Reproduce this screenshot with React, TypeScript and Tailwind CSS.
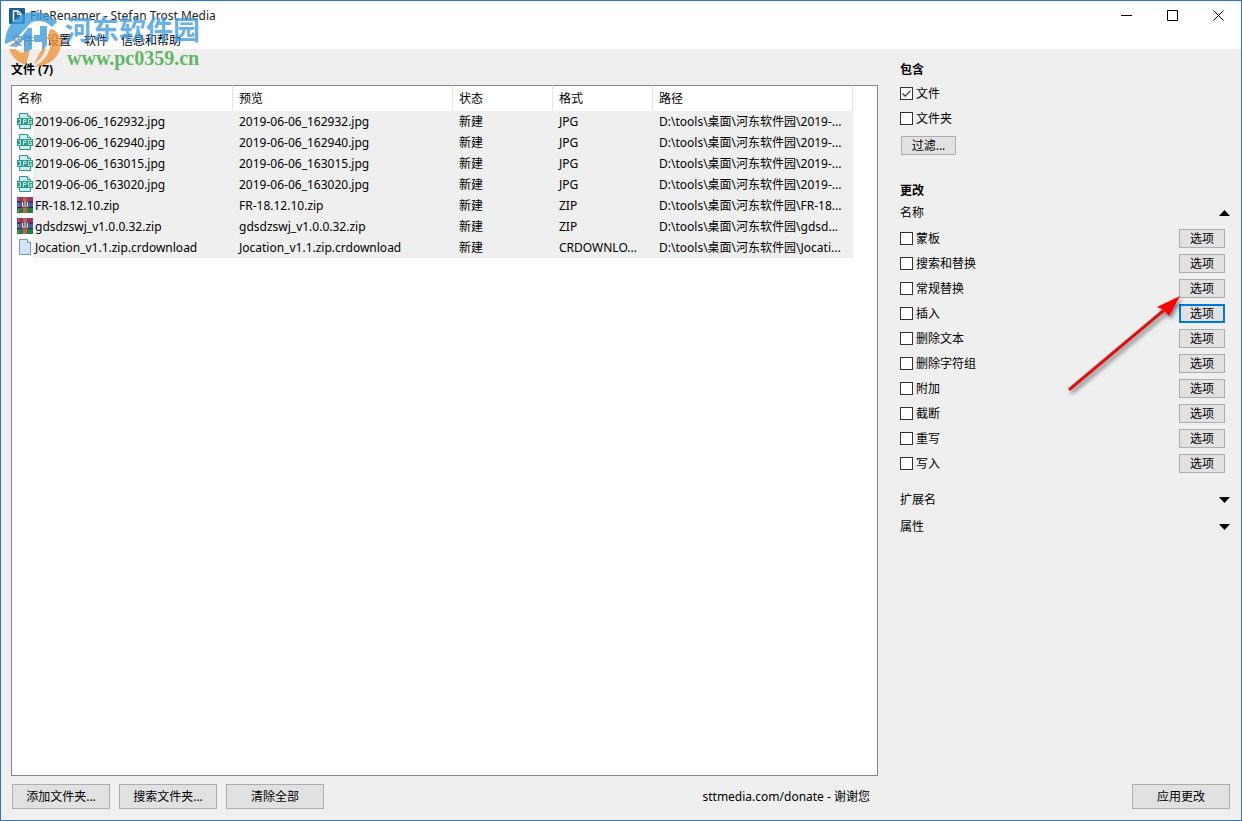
import { useState } from "react";
import clsx from "clsx";

type FileKind = "jpg" | "zip" | "blank";

type FileRow = {
  name: string;
  kind: FileKind;
  format: string;
  path: string;
};

const FILES: FileRow[] = [
  { name: "2019-06-06_162932.jpg", kind: "jpg", format: "JPG", path: "D:\\tools\\桌面\\河东软件园\\2019-..." },
  { name: "2019-06-06_162940.jpg", kind: "jpg", format: "JPG", path: "D:\\tools\\桌面\\河东软件园\\2019-..." },
  { name: "2019-06-06_163015.jpg", kind: "jpg", format: "JPG", path: "D:\\tools\\桌面\\河东软件园\\2019-..." },
  { name: "2019-06-06_163020.jpg", kind: "jpg", format: "JPG", path: "D:\\tools\\桌面\\河东软件园\\2019-..." },
  { name: "FR-18.12.10.zip", kind: "zip", format: "ZIP", path: "D:\\tools\\桌面\\河东软件园\\FR-18..." },
  { name: "gdsdzswj_v1.0.0.32.zip", kind: "zip", format: "ZIP", path: "D:\\tools\\桌面\\河东软件园\\gdsd..." },
  { name: "Jocation_v1.1.zip.crdownload", kind: "blank", format: "CRDOWNLO...", path: "D:\\tools\\桌面\\河东软件园\\Jocati..." },
];

const COLUMNS = ["名称", "预览", "状态", "格式", "路径"];
const MENU = ["文件", "设置", "软件", "信息和帮助"];
const CHANGES = [
  "蒙板",
  "搜索和替换",
  "常规替换",
  "插入",
  "删除文本",
  "删除字符组",
  "附加",
  "截断",
  "重写",
  "写入",
];

function FileIcon({ kind }: { kind: FileKind }) {
  if (kind === "jpg") {
    return (
      <svg width="16" height="16" viewBox="0 0 16 16" className="mt-[2px] shrink-0" aria-hidden="true">
        <path d="M2.500 .5h8l3 3v12h-11z" fill="#c9f0ee" stroke="#2c9b8c" />
        <path d="M10.500 .5v3h3" fill="#fff" stroke="#2c9b8c" />
        <rect x="0" y="5" width="16" height="7" fill="#2c9b8c" />
        <path
          d="M1.500 6.500h2v4h-2.500M6.500 11v-4.500h2.500v2h-2.500M15 6.500h-3.500v4h3v-2h-1.500"
          fill="none"
          stroke="#c8efe6"
          strokeWidth=".9"
        />
      </svg>
    );
  }
  if (kind === "zip") {
    return (
      <svg width="16" height="16" viewBox="0 0 16 16" className="mt-[2px] shrink-0" aria-hidden="true">
        <rect width="16" height="5" fill="#9c3569" />
        <rect y="5" width="16" height="6" fill="#3a63b4" />
        <rect y="11" width="16" height="5" fill="#267a4c" />
        <path d="M0 5h16M0 10.500h16" stroke="#2b2348" />
        <path d="M1.500 1v3M1.500 6v4M1.500 12v3" stroke="#e7a3c8" strokeOpacity=".5" />
        <rect x="6" width="4" height="16" fill="#b5683b" />
        <rect x="4" y="4" width="8" height="7" fill="#6b4a61" />
        <path d="M5.500 5v4h5V5M8 4v4" fill="none" stroke="#f3ece0" />
      </svg>
    );
  }
  return (
    <svg width="16" height="16" viewBox="0 0 16 16" className="mt-[2px] shrink-0" aria-hidden="true">
      <path d="M2.500 .5h8l3 3v12h-11z" fill="#cfe3fb" stroke="#7f97b8" />
      <path d="M10.500 .5v3h3" fill="#f3f9ff" stroke="#7f97b8" />
    </svg>
  );
}

function CheckRow({ label, defaultChecked }: { label: string; defaultChecked?: boolean }) {
  return (
    <label className="flex h-[25px] items-center gap-[3px]">
      <span className="grid">
        <input
          type="checkbox"
          defaultChecked={defaultChecked}
          className="peer col-start-1 row-start-1 size-[13px] appearance-none border border-[#333] bg-white"
        />
        <svg
          width="13"
          height="13"
          viewBox="0 0 13 13"
          className="pointer-events-none invisible col-start-1 row-start-1 peer-checked:visible"
          aria-hidden="true"
        >
          <path d="M2.500 6.500l2.700 2.700 5.300-5.500" fill="none" stroke="#333" strokeWidth="1.200" />
        </svg>
      </span>
      {label}
    </label>
  );
}

function Triangle({ up }: { up?: boolean }) {
  return (
    <svg width="11" height="6" viewBox="0 0 11 6" aria-hidden="true">
      <path d={up ? "M0 6L5.500 0 11 6z" : "M0 0h11L5.500 6z"} fill="#000" />
    </svg>
  );
}

function Section({ label, open, onToggle, className }: {
  label: string;
  open?: boolean;
  onToggle?: () => void;
  className?: string;
}) {
  return (
    <button
      type="button"
      onClick={onToggle}
      className={clsx("flex h-[18px] w-full items-center justify-between", className)}
    >
      {label}
      <Triangle up={open} />
    </button>
  );
}

function FooterButton({ label }: { label: string }) {
  return (
    <button type="button" className="h-[25px] w-[98px] border border-[#adadad] bg-[#e1e1e1]">
      {label}
    </button>
  );
}

function Watermark() {
  return (
    <div className="pointer-events-none absolute top-2 left-1 flex select-none">
      <svg width="60" height="62" viewBox="0 0 60 62" aria-hidden="true">
        <g fill="#3d9bdc" fillOpacity=".8">
          {/* upper arc, left stem, right stem */}
          <path d="M0 35C0 16 13 3 30 3c9 0 17 4 22 10l-5 5c-4-4-8-6-13-6-6 0-9 2-12 6L10 31z" />
          <path d="M2 37l8-1 13-17h4v21l-8 4V30l-7 8z" />
          <path d="M29 26h6v-9h7v19l-5 6v-9h-8z" />
        </g>
        <g fill="#f2953c" fillOpacity=".8">
          <path d="M4 40h6l6 4 9-3-4 15C13 54 7 48 4 40z" />
          <path d="M45 20c7 1 11 7 11 14 0 14-12 23-27 24 9-6 14-11 16-19 1-5 1-9-3-9z" />
          <path d="M35 43l6-5c-2 8-6 13-12 17z" />
        </g>
      </svg>
      <div className="flex flex-col">
        <span className="h-[36px] font-['Noto_Sans_CJK_SC',sans-serif] text-[27px] leading-[40px] font-bold text-[#3f9ae0]/80">
          河东软件园
        </span>
        <span className="pl-[2px] font-['Liberation_Serif',serif] text-[20px] leading-[26px] font-bold text-[#4caf50]/90">
          www.pc0359.cn
        </span>
      </div>
    </div>
  );
}

export default function App() {
  const [nameOpen, setNameOpen] = useState(true);

  return (
    <div className="relative flex min-h-screen flex-col border border-[#2a7ab9] bg-[#efefef] font-['Noto_Sans','Noto_Sans_CJK_SC',sans-serif] text-xs text-black">
      <header className="bg-white">
        <div className="flex h-[29px] items-center pl-2">
          <svg width="16" height="16" viewBox="0 0 16 16" aria-hidden="true">
            <rect width="16" height="16" rx="1" fill="#176099" />
            <path d="M4.500 3h4.500l3 3v7h-7.500z" fill="none" stroke="#fff" strokeWidth="1.500" />
            <path d="M8.500 3v3.500h3.500" fill="none" stroke="#fff" />
          </svg>
          <h1 className="flex-1 pl-[5px] text-[#222]">FileRenamer - Stefan Trost Media</h1>
          <button type="button" aria-label="最小化" className="flex h-full w-[46px] items-center justify-center">
            <svg width="11" height="11" viewBox="0 0 11 11"><path d="M0 5.500h11" stroke="#000" /></svg>
          </button>
          <button type="button" aria-label="最大化" className="flex h-full w-[46px] items-center justify-center">
            <svg width="11" height="11" viewBox="0 0 11 11"><path d="M.5.5h10v10H.5z" fill="none" stroke="#000" /></svg>
          </button>
          <button type="button" aria-label="关闭" className="flex h-full w-[46px] items-center justify-center">
            <svg width="11" height="11" viewBox="0 0 11 11"><path d="M.5.5l10 10M10.500.5l-10 10" stroke="#000" /></svg>
          </button>
        </div>
        <nav className="flex h-[19px] items-center gap-[13px] pt-[3px] pl-[9px]">
          {MENU.map((item, i) => (
            <button key={item} type="button" className={clsx(i === 0 && "text-gray-500")}>
              {item}
            </button>
          ))}
        </nav>
      </header>

      <div className="flex flex-1 gap-[22px] pt-3 pr-[11px] pb-[11px] pl-[10px]">
        <main className="flex min-w-0 flex-1 flex-col">
          <h2 className="h-[18px] leading-[18px] font-bold">文件 (7)</h2>
          <div className="mt-[6px] flex-1 overflow-hidden border border-[#828790] bg-white">
            <table className="w-[841px] table-fixed border-separate border-spacing-0 text-left">
              <colgroup>
                <col className="w-[221px]" />
                <col className="w-[220px]" />
                <col className="w-[100px]" />
                <col className="w-[100px]" />
                <col className="w-[200px]" />
              </colgroup>
              <thead>
                <tr className="h-[25px]">
                  {COLUMNS.map((c) => (
                    <th key={c} className="border-r border-[#e5e5e5] p-0 pl-[6px] font-normal">
                      {c}
                    </th>
                  ))}
                </tr>
              </thead>
              <tbody>
                {FILES.map((f) => (
                  <tr key={f.name} className="h-[21px] whitespace-nowrap">
                    <td className="p-0 pl-[5px]">
                      <div className="flex h-[21px]">
                        <FileIcon kind={f.kind} />
                        <span className="flex-1 bg-[#efefef] pl-[2px] leading-[21px]">{f.name}</span>
                      </div>
                    </td>
                    <td className="bg-[#efefef] p-0 pl-[6px]">{f.name}</td>
                    <td className="bg-[#efefef] p-0 pl-[6px]">新建</td>
                    <td className="bg-[#efefef] p-0 pl-[6px]">{f.format}</td>
                    <td className="bg-[#efefef] p-0 pl-[6px]">{f.path}</td>
                  </tr>
                ))}
              </tbody>
            </table>
          </div>
          <footer className="mt-2 flex items-center gap-[9px] pl-px">
            <FooterButton label="添加文件夹..." />
            <FooterButton label="搜索文件夹..." />
            <FooterButton label="清除全部" />
            <a href="#donate" className="ml-auto pr-[8px]">
              sttmedia.com/donate - 谢谢您
            </a>
          </footer>
        </main>

        <aside className="flex w-[330px] shrink-0 flex-col">
          <h2 className="h-[18px] leading-[18px] font-bold">包含</h2>
          <div className="mt-[2px]">
            <CheckRow label="文件" defaultChecked />
            <CheckRow label="文件夹" />
          </div>
          <button type="button" className="mt-[5px] ml-px h-[19px] w-[55px] border border-[#adadad] bg-[#e1e1e1] leading-[17px]">
            过滤...
          </button>

          <h2 className="mt-[27px] h-[18px] leading-[18px] font-bold">更改</h2>
          <Section label="名称" open={nameOpen} onToggle={() => setNameOpen(!nameOpen)} className="mt-1" />
          {nameOpen && (
            <div className="relative mt-1 pr-[5px]">
              {CHANGES.map((c) => (
                <div key={c} className="flex h-[25px] items-center justify-between">
                  <CheckRow label={c} />
                  <button
                    type="button"
                    className={clsx(
                      "flex h-[19px] w-[46px] items-center justify-center bg-[#e1e1e1]",
                      c === "插入" ? "border-2 border-[#0078d7]" : "border border-[#adadad]"
                    )}
                  >
                    选项
                  </button>
                </div>
              ))}
              <svg
                width="120"
                height="110"
                viewBox="0 0 120 110"
                className="pointer-events-none absolute top-[66px] right-[45px] drop-shadow-[2px_3px_2px_rgba(0,0,0,0.5)]"
                aria-hidden="true"
              >
                <path d="M5 97L98 19" stroke="#e01010" strokeWidth="3" strokeLinecap="round" />
                <path d="M115 4L104 24 99 18 92 15z" fill="#f00" />
              </svg>
            </div>
          )}
          <Section label="扩展名" className="mt-[15px]" />
          <Section label="属性" className="mt-[9px]" />
          <div className="mt-auto self-end">
            <FooterButton label="应用更改" />
          </div>
        </aside>
      </div>

      <Watermark />
    </div>
  );
}
